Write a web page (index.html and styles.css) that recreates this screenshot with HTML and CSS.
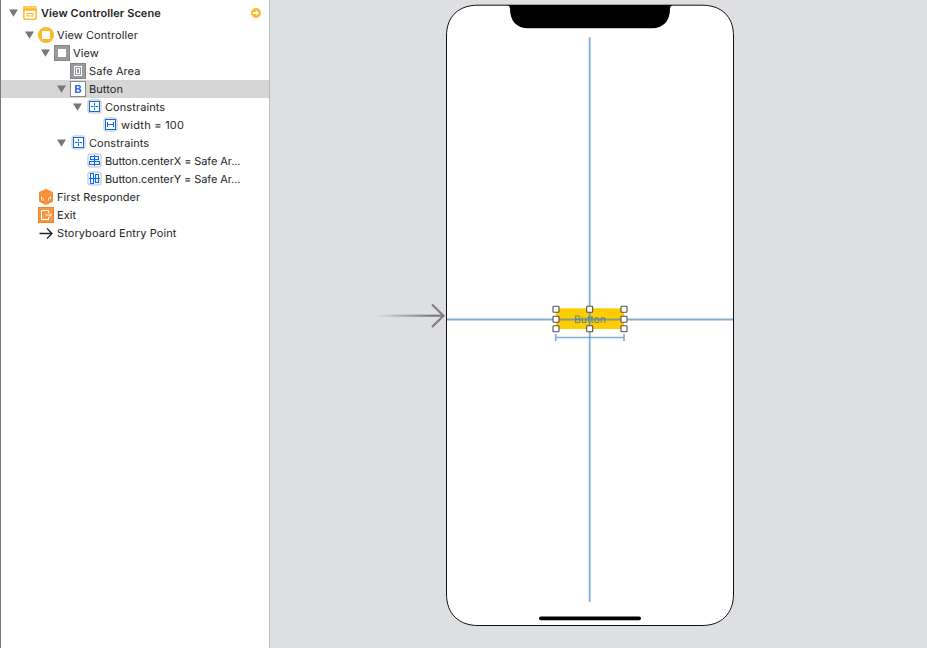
FILE: index.html
```html
<!DOCTYPE html>
<html lang="en">
<head>
<meta charset="utf-8">
<title>View Controller Scene</title>
<link rel="stylesheet" href="styles.css">
</head>
<body>
<svg width="0" height="0" class="defs">
  <symbol id="tri" viewBox="0 0 9 8"><path d="M0 0.500h9L4.500 7.800z" fill="#77777a"/></symbol>
  <symbol id="constraints" viewBox="0 0 16 16"><rect x="2" y="1" width="13" height="13" rx="2" fill="#fff" stroke="#bdbdbd"/><rect x="3.500" y="2.500" width="10" height="10" fill="none" stroke="#0a6cf0"/><path d="M8.500 4v2.500M8.500 8.500V11M5 7.500h2.500M9.500 7.500H12M8 7.500h1" stroke="#0a6cf0"/></symbol>
</svg>
<div class="editor">
  <aside class="outline">
    <div class="row scene"><svg class="tri"><use href="#tri"/></svg>
      <svg class="icon" viewBox="0 0 16 16"><path d="M1.200 1.200h13.600v4H1.200z" fill="#fdb82b"/><path d="M1.900 5h12.200v8a1.200 1.200 0 0 1-1.200 1.200H3.100A1.200 1.200 0 0 1 1.900 13z" fill="#fff" stroke="#fdb82b" stroke-width="1.500"/><path d="M3.500 3.400l1-1.500M6.500 3.400l1-1.500M9.500 3.400l1-1.500M12.500 3.400l1-1.500" stroke="#fff"/><rect x="5" y="8.500" width="6" height="2.500" fill="none" stroke="#fdb82b"/></svg>
      <span class="label">View Controller Scene</span>
      <svg class="go" viewBox="0 0 10 10"><circle cx="5" cy="5" r="5" fill="#fdb82b"/><path d="M2 4h3V2.200L8.200 5 5 7.800V6H2z" fill="#fff"/></svg></div>
    <div class="row l1"><svg class="tri"><use href="#tri"/></svg>
      <svg class="icon" viewBox="0 0 16 16"><circle cx="8" cy="8" r="8" fill="#fdb82b"/><rect x="4" y="4" width="8" height="8" rx=".5" fill="#fff"/></svg><span class="label">View Controller</span></div>
    <div class="row l2"><svg class="tri"><use href="#tri"/></svg>
      <svg class="icon" viewBox="0 0 16 16"><rect x=".5" y=".5" width="15" height="15" fill="#9b9b9f" stroke="#858589"/><rect x="4" y="4" width="8" height="8" fill="#fff"/></svg><span class="label">View</span></div>
    <div class="row l3"><span class="tri"></span>
      <svg class="icon" viewBox="0 0 16 16"><rect x=".5" y=".5" width="15" height="15" fill="#9b9b9f" stroke="#858589"/><rect x="4.500" y="3.500" width="7" height="9" fill="none" stroke="#fff"/><rect x="6.500" y="5.500" width="3" height="5" fill="none" stroke="#fff"/></svg><span class="label">Safe Area</span></div>
    <div class="row l3 selected"><svg class="tri"><use href="#tri"/></svg><span class="icon b-icon">B</span><span class="label">Button</span></div>
    <div class="row l4"><svg class="tri"><use href="#tri"/></svg><svg class="icon"><use href="#constraints"/></svg><span class="label">Constraints</span></div>
    <div class="row l5"><span class="tri"></span>
      <svg class="icon" viewBox="0 0 16 16"><rect x="2" y="1" width="13" height="13" rx="2" fill="#fff" stroke="#bdbdbd"/><rect x="3.500" y="2.500" width="10" height="10" fill="none" stroke="#0a6cf0"/><path d="M5.500 5v5M11.500 5v5M5.500 7.500h6" stroke="#0a6cf0"/></svg><span class="label wide">width = 100</span></div>
    <div class="row l3"><svg class="tri"><use href="#tri"/></svg><svg class="icon"><use href="#constraints"/></svg><span class="label">Constraints</span></div>
    <div class="row l4"><span class="tri"></span>
      <svg class="icon" viewBox="0 0 16 16"><rect x="2" y="1" width="13" height="13" rx="2" fill="#fff" stroke="#bdbdbd"/><g fill="none" stroke="#0a6cf0" stroke-width="1.100"><path d="M8.500 2v11"/><rect x="4.500" y="3.500" width="8" height="3"/><rect x="3.500" y="8.500" width="10" height="3"/></g></svg><span class="label tight">Button.centerX = Safe Ar...</span></div>
    <div class="row l4"><span class="tri"></span>
      <svg class="icon" viewBox="0 0 16 16"><rect x="2" y="1" width="13" height="13" rx="2" fill="#fff" stroke="#bdbdbd"/><g fill="none" stroke="#0a6cf0" stroke-width="1.100"><path d="M3 7.500h11"/><rect x="4.500" y="2.500" width="3" height="10"/><rect x="9.500" y="3.500" width="3" height="8"/></g></svg><span class="label tight">Button.centerY = Safe Ar...</span></div>
    <div class="row l1"><span class="tri"></span>
      <svg class="icon" viewBox="0 0 16 16"><path d="M8 .5l6.500 2.800v9.200L8 15.500l-6.500-3V3.300z" fill="#f78c35" stroke="#f78c35" stroke-linejoin="round"/><path d="M1.500 4L8 6.300 14.500 4M8 6.300v9" fill="none" stroke="#f9a765" stroke-width=".7"/><path d="M3.500 6.800v4l2 .8V9.300l-2-.7M10.500 9v2.500M12.500 7v3.500M10 9.300l2.500-1" fill="none" stroke="#fff" stroke-opacity=".85" stroke-width=".8"/></svg><span class="label">First Responder</span></div>
    <div class="row l1"><span class="tri"></span>
      <svg class="icon" viewBox="0 0 16 16"><rect x=".5" y=".5" width="15" height="15" fill="#f99644" stroke="#f28227"/><path d="M10.500 6V3.500h-7v9h7V10M7.500 8h6M11.500 6.300L13.400 8l-1.900 1.700" fill="none" stroke="#fff"/></svg><span class="label">Exit</span></div>
    <div class="row l1"><span class="tri"></span>
      <svg class="icon" viewBox="0 0 16 16"><path d="M1.500 8.500h12.500M9 3.500l5 5-5 5" fill="none" stroke="#252525" stroke-width="1.300"/></svg><span class="label">Storyboard Entry Point</span></div>
  </aside>
  <main class="canvas">
    <svg width="657" height="648" viewBox="270 0 657 648">
      <defs><linearGradient id="fade" gradientUnits="userSpaceOnUse" x1="376" y1="0" x2="430" y2="0"><stop offset="0" stop-color="#7d7d7d" stop-opacity="0"/><stop offset="1" stop-color="#7d7d7d"/></linearGradient></defs>
      <rect x="376" y="314.600" width="67" height="2.200" fill="url(#fade)"/>
      <path d="M432 304.500l11.500 11.200L432 327" fill="none" stroke="#808080" stroke-width="2.200"/>
      <path d="M478 5.200H702C721 5.200 733.500 16 733.500 36V594C733.500 614 721 625.500 702 625.500H478C459 625.500 446.500 614 446.500 594V36C446.500 16 459 5.200 478 5.200z" fill="#fff" stroke="#111" stroke-width="1"/>
      <path d="M507 5H673Q670 5.500 670 9C670 21 663 28.300 652 28.300H528C517 28.300 510 21 510 9Q510 5.500 507 5z" fill="#000"/>
      <rect x="539" y="616.600" width="102" height="3.600" rx="1.800" fill="#000"/>
      <rect x="556" y="308.300" width="68" height="20.700" fill="#ffcc02"/>
      <text x="590" y="322.800" text-anchor="middle" class="button-text">Button</text>
      <g fill="none" stroke="#3f83bd" stroke-opacity=".65">
        <path d="M589.700 37.300V601.800M447 319.500H733" stroke-width="1.800"/>
        <path d="M555.700 337.500H624M555.700 334v7M624 334v7" stroke-width="1.700"/>
      </g>
      <g fill="#fff" stroke="#514f48" stroke-width="1.100">
        <rect x="553" y="306.200" width="6" height="6" rx=".7"/><rect x="586.700" y="306.200" width="6" height="6" rx=".7"/><rect x="621" y="306.200" width="6" height="6" rx=".7"/>
        <rect x="553" y="316.300" width="6" height="6" rx=".7"/><rect x="621" y="316.300" width="6" height="6" rx=".7"/>
        <rect x="553" y="325.800" width="6" height="6" rx=".7"/><rect x="586.700" y="325.800" width="6" height="6" rx=".7"/><rect x="621" y="325.800" width="6" height="6" rx=".7"/>
      </g>
    </svg>
  </main>
</div>
</body>
</html>
```
FILE: styles.css
```css
* { box-sizing: border-box; }
body { margin: 0; overflow: hidden; font: 11px/18px Inter, "Liberation Sans", sans-serif; color: #252525; text-rendering: geometricPrecision; }
.defs { display: none; }
.editor { display: flex; width: 927px; height: 648px; }
.outline { width: 270px; background: #fff; border-left: 1px solid #79787f; border-right: 1px solid #b9bcbd; }
.row { display: flex; align-items: center; height: 18px; white-space: nowrap; letter-spacing: .08px; }
.scene { height: 26px; padding: 0 8px 0 8px; font-weight: 600; }
.l1 { padding-left: 24px; }
.l2 { padding-left: 40px; }
.l3 { padding-left: 56px; }
.l4 { padding-left: 72px; }
.l5 { padding-left: 88px; }
.wide { letter-spacing: .25px; }
.tight { letter-spacing: -.1px; }
.selected { background: #d6d6d6; }
.tri { width: 9px; height: 8px; margin-right: 4px; flex: none; }
.icon { width: 16px; height: 16px; margin-right: 3px; flex: none; }
.b-icon { background: #fff; border: 1px solid #87878b; color: #2c6bea; font-weight: 700; line-height: 14px; text-align: center; }
.go { width: 10px; height: 10px; margin-left: auto; }
.canvas { flex: 1; background: #dedfe3; }
.canvas svg { display: block; }
.button-text { font: 400 10.3px Inter, sans-serif; fill: #3f839b; letter-spacing: .1px; }
```
